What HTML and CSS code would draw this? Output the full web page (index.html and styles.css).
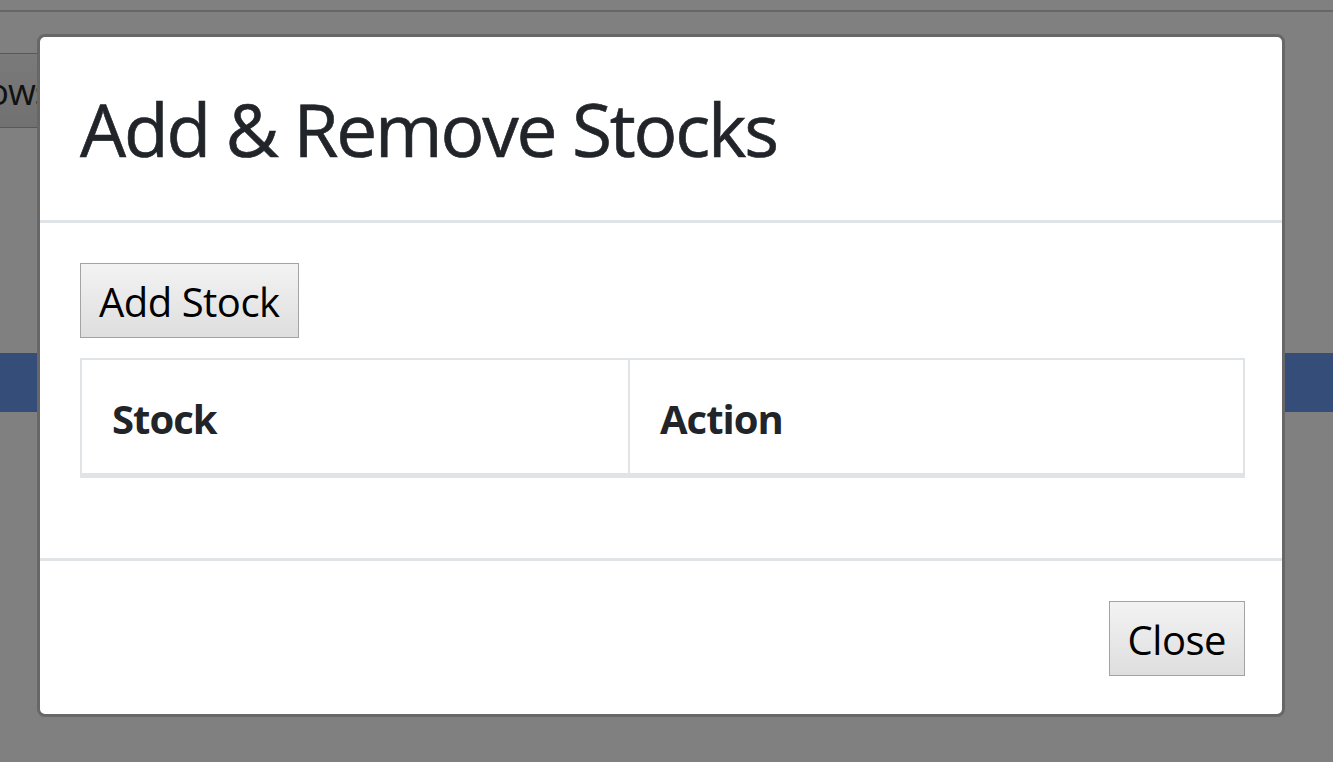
FILE: index.html
```html
<!DOCTYPE html>
<html lang="en">
<head>
<meta charset="utf-8">
<title>Add &amp; Remove Stocks</title>
<link rel="stylesheet" href="styles.css">
</head>
<body>
<div class="page">
  <div class="topbar"></div>
  <div class="toolbar">
    <button class="page-btn" type="button">Rows</button>
  </div>
  <div class="band"></div>
</div>

<div class="modal">
  <div class="modal-header">
    <h4 class="modal-title">Add &amp; Remove Stocks</h4>
  </div>
  <div class="modal-body">
    <button class="btn" type="button">Add Stock</button>
    <table class="stock-table">
      <thead>
        <tr>
          <th class="col-stock">Stock</th>
          <th class="col-action">Action</th>
        </tr>
      </thead>
      <tbody></tbody>
    </table>
  </div>
  <div class="modal-footer">
    <button class="btn" type="button">Close</button>
  </div>
</div>
</body>
</html>
```

FILE: styles.css
```css
* { box-sizing: border-box; }

html, body {
  margin: 0;
  padding: 0;
  height: 100%;
}

body {
  background: #808080;
  font-family: "Open Sans", "Noto Sans", "Liberation Sans", sans-serif;
  color: #212529;
  overflow: hidden;
}

.page {
  display: flex;
  flex-direction: column;
}

.topbar {
  height: 12px;
  border-bottom: 2px solid #676767;
}

.toolbar {
  display: flex;
  padding-top: 41px;
}

.page-btn {
  margin-left: -55px;
  height: 75px;
  padding: 3px 20px 0 20px;
  font-family: "Open Sans", "Noto Sans", sans-serif;
  font-size: 36px;
  line-height: 70px;
  letter-spacing: -1px;
  color: #111;
  background: linear-gradient(#7a7a7a, #717171);
  border: 1px solid #585858;
}

.band {
  margin-top: 225px;
  height: 59px;
  background: #344d79;
}

.modal {
  position: absolute;
  left: 37px;
  top: 34px;
  width: 1248px;
  background: #fff;
  border: 3px solid #676767;
  border-radius: 8px;
  display: flex;
  flex-direction: column;
}

.modal-header {
  padding: 40px 40px;
  border-bottom: 3px solid #e1e4e7;
}

.modal-title {
  margin: 0;
  font-size: 73px;
  line-height: 103px;
  font-weight: 500;
  color: #212529;
  letter-spacing: -2.2px;
  -webkit-text-stroke: 0.6px #212529;
}

.modal-body {
  padding: 40px 37px 40px 40px;
  display: flex;
  flex-direction: column;
  align-items: flex-start;
}

.btn {
  height: 75px;
  padding: 2px 18px 0 18px;
  font-family: "Open Sans", "Noto Sans", sans-serif;
  font-size: 40px;
  line-height: 70px;
  letter-spacing: -0.5px;
  color: #000;
  background: linear-gradient(#f3f3f3, #dedede);
  border: 1px solid #a3a3a3;
  border-radius: 0;
}

.stock-table {
  margin-top: 20px;
  margin-bottom: 40px;
  width: 1165px;
  border-collapse: collapse;
  border: 2px solid #e1e4e7;
}

.stock-table th {
  text-align: left;
  font-size: 40px;
  font-weight: 700;
  line-height: 53px;
  letter-spacing: -1px;
  padding: 32px 30px 28px 30px;
  border: 2px solid #e1e4e7;
  border-bottom: 5px solid #e1e4e7;
  color: #212529;
}

.col-stock { width: 548px; }

.modal-footer {
  padding: 40px 37px 38px 40px;
  border-top: 3px solid #e1e4e7;
  display: flex;
  justify-content: flex-end;
}
```
